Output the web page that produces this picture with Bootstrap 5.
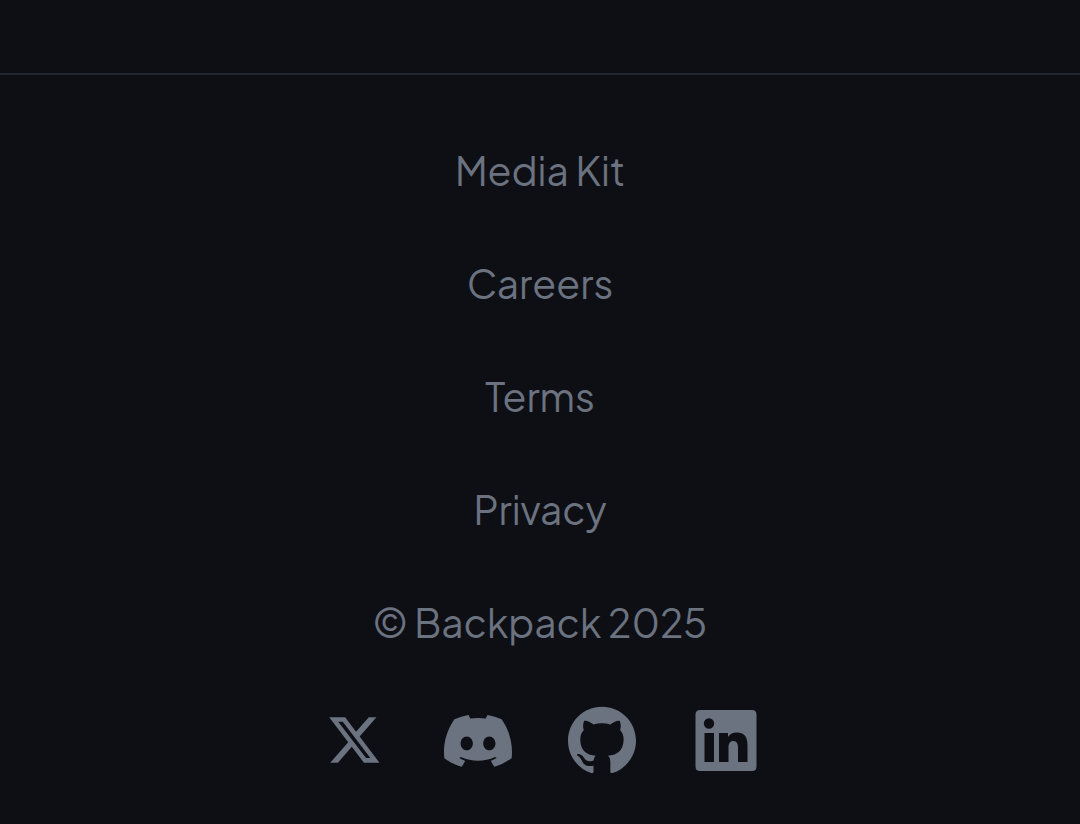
<!DOCTYPE html>
<html lang="en">
<head>
<meta charset="utf-8">
<meta name="viewport" content="width=device-width, initial-scale=1">
<title>Backpack</title>
<link href="https://cdn.jsdelivr.net/npm/bootstrap@5.3.0/dist/css/bootstrap.min.css" rel="stylesheet">
<style>
body { background: #0e0f14; color: #6b7280; font-family: "Plus Jakarta Sans", Inter, sans-serif; }
.site-footer { margin-top: 73px; padding: 66px 24px 48px; border-top: 2px solid #202630; }
.footer-links { gap: 53px; font-size: 39px; line-height: 60px; font-weight: 400; }
.footer-links a, .social a { color: inherit; text-decoration: none; }
.footer-links a:hover, .social a:hover { color: #9ca3af; }
.social { gap: 56px; margin-top: 53px; }
.social svg { display: block; width: 68px; height: 68px; fill: currentColor; }
</style>
</head>
<body>
<footer class="site-footer">
  <nav class="footer-links d-flex flex-column align-items-center text-center" aria-label="Footer">
    <a href="#media-kit">Media Kit</a>
    <a href="#careers">Careers</a>
    <a href="#terms">Terms</a>
    <a href="#privacy">Privacy</a>
    <span>© Backpack 2025</span>
  </nav>
  <div class="social d-flex justify-content-center">
    <a href="#x" aria-label="X"><svg viewBox="-2.7 -2.6 29.2 29.2"><path d="M18.244 2.25h3.308l-7.227 8.26 8.502 11.24H16.17l-5.214-6.817L4.99 21.75H1.68l7.73-8.835L1.254 2.25H8.08l4.713 6.231zm-1.161 17.52h1.833L7.084 4.126H5.117z"/></svg></a>
    <a href="#discord" aria-label="Discord"><svg viewBox="0 -.3 24 24"><path d="M20.317 4.3698a19.7913 19.7913 0 00-4.8851-1.5152.0741.0741 0 00-.0785.0371c-.211.3753-.4447.8648-.6083 1.2495-1.8447-.2762-3.68-.2762-5.4868 0-.1636-.3933-.4058-.8742-.6177-1.2495a.077.077 0 00-.0785-.037 19.7363 19.7363 0 00-4.8852 1.515.0699.0699 0 00-.0321.0277C.5334 9.0458-.319 13.5799.0992 18.0578a.0824.0824 0 00.0312.0561c2.0528 1.5076 4.0413 2.4228 5.9929 3.0294a.0777.0777 0 00.0842-.0276c.4616-.6304.8731-1.2952 1.226-1.9942a.076.076 0 00-.0416-.1057c-.6528-.2476-1.2743-.5495-1.8722-.8923a.077.077 0 01-.0076-.1277c.1258-.0943.2517-.1923.3718-.2914a.0743.0743 0 01.0776-.0105c3.9278 1.7933 8.18 1.7933 12.0614 0a.0739.0739 0 01.0785.0095c.1202.099.246.1981.3728.2924a.077.077 0 01-.0066.1276 12.2986 12.2986 0 01-1.873.8914.0766.0766 0 00-.0407.1067c.3604.698.7719 1.3628 1.225 1.9932a.076.076 0 00.0842.0286c1.961-.6067 3.9495-1.5219 6.0023-3.0294a.077.077 0 00.0313-.0552c.5004-5.177-.8382-9.6739-3.5485-13.6604a.061.061 0 00-.0312-.0286zM8.02 15.3312c-1.1825 0-2.1569-1.0857-2.1569-2.419 0-1.3332.9555-2.4189 2.157-2.4189 1.2108 0 2.1757 1.0952 2.1568 2.419 0 1.3332-.9555 2.4189-2.1569 2.4189zm7.9748 0c-1.1825 0-2.1569-1.0857-2.1569-2.419 0-1.3332.9554-2.4189 2.1569-2.4189 1.2108 0 2.1757 1.0952 2.1568 2.419 0 1.3332-.946 2.4189-2.1568 2.4189z"/></svg></a>
    <a href="#github" aria-label="GitHub"><svg viewBox="0 0 24 24"><path d="M12 .297c-6.63 0-12 5.373-12 12 0 5.303 3.438 9.8 8.205 11.385.6.113.82-.258.82-.577 0-.285-.01-1.04-.015-2.04-3.338.724-4.042-1.61-4.042-1.61C4.422 18.07 3.633 17.7 3.633 17.7c-1.087-.744.084-.729.084-.729 1.205.084 1.838 1.236 1.838 1.236 1.07 1.835 2.809 1.305 3.495.998.108-.776.417-1.305.76-1.605-2.665-.3-5.466-1.332-5.466-5.93 0-1.31.465-2.38 1.235-3.22-.135-.303-.54-1.523.105-3.176 0 0 1.005-.322 3.3 1.23.96-.267 1.98-.399 3-.405 1.02.006 2.04.138 3 .405 2.28-1.552 3.285-1.23 3.285-1.23.645 1.653.24 2.873.12 3.176.765.84 1.23 1.91 1.23 3.22 0 4.61-2.805 5.625-5.475 5.92.42.36.81 1.096.81 2.22 0 1.606-.015 2.896-.015 3.286 0 .315.21.69.825.57C20.565 22.092 24 17.592 24 12.297c0-6.627-5.373-12-12-12"/></svg></a>
    <a href="#linkedin" aria-label="LinkedIn"><svg viewBox="0 0 68 68"><path fill-rule="evenodd" d="M8 4h52q4.500 0 4.500 4.500v52q0 4.500-4.500 4.500H8q-4.500 0-4.500-4.500v-52Q3.500 4 8 4zM12.500 27v29h9.500V27zM17 12.300a5.200 5.200 0 1 0 0 10.400a5.200 5.200 0 1 0 0-10.400zM27 27v29h9.500V41.500c0-4 1.500-6.500 5-6.500 3.500 0 4.500 3 4.500 6.500V56h9.500V40c0-8-2-13.500-10.800-13.500-4.300 0-7.200 2-8.700 4.500V27z"/></svg></a>
  </div>
</footer>
<script src="https://cdn.jsdelivr.net/npm/bootstrap@5.3.0/dist/js/bootstrap.bundle.min.js"></script>
</body>
</html>
